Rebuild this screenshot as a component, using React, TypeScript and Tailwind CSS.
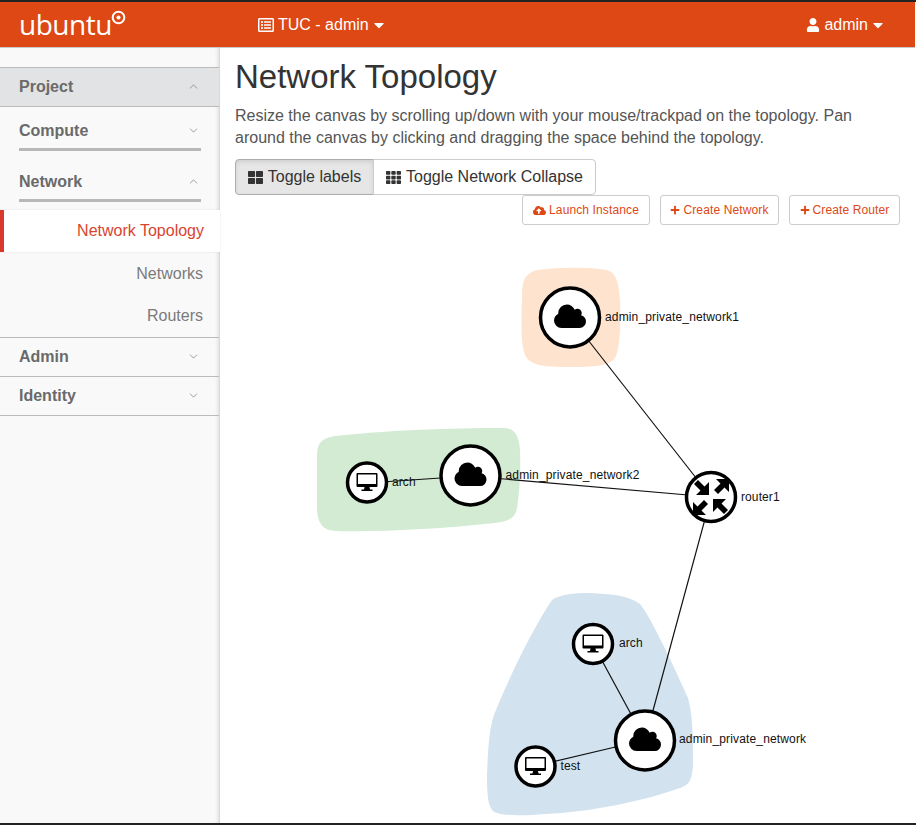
import { ChevronDown, ChevronUp } from "lucide-react"
import { FaCaretDown, FaCloudUploadAlt, FaPlus, FaRegListAlt, FaTh, FaThLarge, FaUser } from "react-icons/fa"

const font = "font-['Liberation_Sans',Arial,sans-serif]"

function SideHead({ label, open, active, line, className }: any) {
  const Chevron = open ? ChevronUp : ChevronDown
  return (
    <div className={`flex items-center pl-[19px] pr-[18px] ${active ? "bg-[#e1e3e5]" : ""} ${className}`}>
      <div className={`flex-1 flex items-center justify-between pr-px text-base font-bold text-[#6a6a6a] ${line ? "border-b-[3px] border-[#b8b8b8] pb-[5px]" : ""}`}>
        {label}
        <Chevron size={13} strokeWidth={1.3} className="text-[#777] mb-[2px]" />
      </div>
    </div>
  )
}

function Sidebar() {
  return (
    <aside className="w-[220px] shrink-0 bg-[#f9f9f9] border-r border-[#d8d8d8] shadow-[inset_-4px_0_4px_-3px_rgba(0,0,0,0.12)] pt-[19px]">
      <SideHead label="Project" open active className="h-10 border-y border-[#bbb]" />
      <SideHead label="Compute" line className="h-[44px] items-end" />
      <SideHead label="Network" open line className="h-[51px] items-end" />
      <div className="mt-2 border-b border-[#bbb]">
        <div className="relative h-[42px] -mr-px bg-white flex items-center justify-end pr-4 text-base text-[#d9442f] shadow-[0_0_2px_rgba(0,0,0,0.1)]">
          <span className="absolute left-0 top-0 bottom-0 w-1 bg-[#d9392c]" />
          Network Topology
        </div>
        <div className="mt-px h-[42px] flex items-center justify-end pr-4 text-base text-[#7b7b7b]">Networks</div>
        <div className="h-[42px] flex items-center justify-end pr-4 text-base text-[#7b7b7b]">Routers</div>
      </div>
      <SideHead label="Admin" className="h-[39px] border-b border-[#bbb]" />
      <SideHead label="Identity" className="h-[39px] border-b border-[#bbb]" />
    </aside>
  )
}

function ActionBtn({ icon, label, className }: any) {
  return (
    <button className={`h-[30px] flex items-center justify-center gap-[3px] bg-white border border-[#ccc] rounded-[3px] text-xs tracking-[0.12px] text-[#dd4814] ${className}`}>
      {icon}
      {label}
    </button>
  )
}

function NetworkNode({ x, y, label, lx = 35, ly = 3 }: any) {
  return (
    <g>
      <circle cx={x} cy={y} r={29.5} fill="white" stroke="black" strokeWidth={3.5} />
      <path
        transform={`translate(${x - 16} ${y - 15.1}) scale(${1 / 60})`}
        d="M1920 1152q0 159-112.500 271.500t-271.500 112.500h-1088q-185 0-316.500-131.500t-131.500-316.500q0-132 71-241.500t187-163.500q-2-28-2-43 0-212 150-362t362-150q158 0 286.500 88t187.500 230q70-62 166-62 106 0 181 75t75 181q0 75-41 138 129 30 213 134.500t84 239.500z"
        fill="black"
      />
      <text x={x + lx} y={y + ly} fontSize={12} letterSpacing={0.15} fill="#111">{label}</text>
    </g>
  )
}

function InstanceNode({ x, y, label, lx = 25 }: any) {
  return (
    <g>
      <circle cx={x} cy={y} r={19.5} fill="white" stroke="black" strokeWidth={3.5} />
      <path
        fillRule="evenodd"
        d={`M${x - 9.5} ${y - 9.5}h19a1 1 0 0 1 1 1v12a1 1 0 0 1 -1 1h-7l.5 2.5h2.5v1.5h-11v-1.5h2.5l.5 -2.5h-7a1 1 0 0 1 -1 -1v-12a1 1 0 0 1 1 -1zM${x - 9} ${y - 8}v9.500h18v-9.500z`}
        fill="black"
      />
      <text x={x + lx} y={y + 3} fontSize={12} letterSpacing={0.1} fill="#111">{label}</text>
    </g>
  )
}

function RouterGlyph({ x, y }: any) {
  const inward = "M2 2 L2 15 L6.500 10.500 L13 17 L17 13 L10.500 6.500 L15 2Z"
  const outward = "M18 18 L18 5 L13.500 9.500 L7 3 L3 7 L9.500 13.500 L5 18Z"
  return (
    <g transform={`translate(${x} ${y})`} fill="black">
      <path d={inward} />
      <path d={inward} transform="rotate(180)" />
      <path d={outward} transform="rotate(-90)" />
      <path d={outward} transform="rotate(90)" />
    </g>
  )
}

function Topology() {
  return (
    <svg viewBox="220 225 695 598" className={`block w-[695px] h-[598px] ${font}`}>
      {/* hulls */}
      <path fill="#fee4cf" d="M522 300 C522 285 522 274 537 270 C560 267 590 267 607 270 C617 273 619 285 620 300 C621 325 620 345 616 356 C612 365 600 367 570 367 C545 367 532 366 526 357 C521 347 521 325 522 300Z" />
      <path fill="#d3ebd3" d="M317 455 C317 443 322 438 335 436 C390 430 450 428 503 428 C515 428 519 436 520 450 C521 475 519 495 517 508 C515 519 508 521 495 523 C440 529 380 532 335 531 C322 530 318 523 317 510Z" />
      <path fill="#d2e2ef" d="M552 600 C560 594 575 593 590 593 C610 594 628 595 640 604 C652 618 680 680 688 698 C693 715 693 740 693 765 C692 782 688 785 680 788 C640 802 590 812 545 814 C520 816 500 816 493 811 C488 806 487 795 487 775 C488 750 489 730 494 715 C510 675 535 625 552 600Z" />

      {/* links */}
      <g stroke="#111" strokeWidth={1.2}>
        <line x1={570} y1={317} x2={711} y2={497} />
        <line x1={470} y1={476} x2={711} y2={497} />
        <line x1={367} y1={483} x2={470} y2={476} />
        <line x1={711} y1={497} x2={645} y2={740} />
        <line x1={593} y1={644} x2={645} y2={740} />
        <line x1={535} y1={766} x2={645} y2={740} />
      </g>

      <NetworkNode x={570} y={317.5} label="admin_private_network1" />
      <NetworkNode x={470.5} y={475.5} label="admin_private_network2" />
      <NetworkNode x={645} y={740.5} label="admin_private_network" lx={34} ly={2} />
      <InstanceNode x={367} y={482.5} label="arch" />
      <InstanceNode x={593} y={644} label="arch" lx={26} />
      <InstanceNode x={535.5} y={766.5} label="test" />

      <circle cx={711} cy={497} r={24.5} fill="white" stroke="black" strokeWidth={3.5} />
      <RouterGlyph x={711} y={497} />
      <text x={741} y={501} fontSize={12} letterSpacing={0.1} fill="#111">router1</text>
    </svg>
  )
}

export default function App() {
  return (
    <div className={`h-[825px] w-[916px] flex flex-col overflow-hidden bg-white border-t-2 border-b-2 border-[#222] ${font}`}>
      <header className="h-[46px] shrink-0 mr-px bg-[#dd4814] border-b border-[#c9c9c9] text-white text-base flex items-center">
        <div className="w-[258px] pl-[19px] flex items-start">
          <span className="font-['Open_Sans',sans-serif] font-normal text-[28px] leading-none tracking-[-0.5px] -mt-[2px]">ubuntu</span>
          <svg viewBox="0 0 16 16" className="w-[15px] h-[15px] -mt-[2px] -ml-[1px]">
            <circle cx="8" cy="8" r="6.200" fill="none" stroke="white" strokeWidth="2.200" />
            <circle cx="8" cy="8" r="2.200" fill="white" />
          </svg>
        </div>
        <div className="flex items-center">
          <FaRegListAlt size={16} className="mr-1" />
          TUC - admin
          <FaCaretDown size={16} className="ml-[2px]" />
        </div>
        <div className="ml-auto mr-[29px] flex items-center">
          <FaUser size={14} className="mr-[4px]" />
          admin
          <FaCaretDown size={16} className="ml-[2px]" />
        </div>
      </header>
      <div className="flex flex-1 min-h-0">
        <Sidebar />
        <main className="flex-1 min-w-0">
          <div className="px-[15px]">
            <h1 className="mt-[10px] text-[33px] leading-[38px] font-normal text-[#333]">Network Topology</h1>
            <p className="mt-[9px] text-base leading-[22px] text-[#555] whitespace-nowrap">
              Resize the canvas by scrolling up/down with your mouse/trackpad on the topology. Pan
              <br />
              around the canvas by clicking and dragging the space behind the topology.
            </p>
            <div className="mt-[10px] flex text-base text-[#333]">
              <button className="h-9 w-[139px] flex items-center justify-center gap-[5px] bg-[#e6e6e6] border border-[#adadad] rounded-l-[4px] shadow-[inset_0_2px_4px_rgba(0,0,0,0.1)]">
                <FaThLarge size={15} />
                Toggle labels
              </button>
              <button className="h-9 w-[223px] -ml-px flex items-center justify-center gap-[5px] bg-white border border-[#ccc] rounded-r-[4px]">
                <FaTh size={15} />
                Toggle Network Collapse
              </button>
            </div>
            <div className="flex justify-end gap-[10px] pr-px">
              <ActionBtn className="w-[128px]" icon={<FaCloudUploadAlt size={13} />} label="Launch Instance" />
              <ActionBtn className="w-[119px]" icon={<FaPlus size={10} />} label="Create Network" />
              <ActionBtn className="w-[111px]" icon={<FaPlus size={10} />} label="Create Router" />
            </div>
          </div>
          <Topology />
        </main>
      </div>
    </div>
  )
}
